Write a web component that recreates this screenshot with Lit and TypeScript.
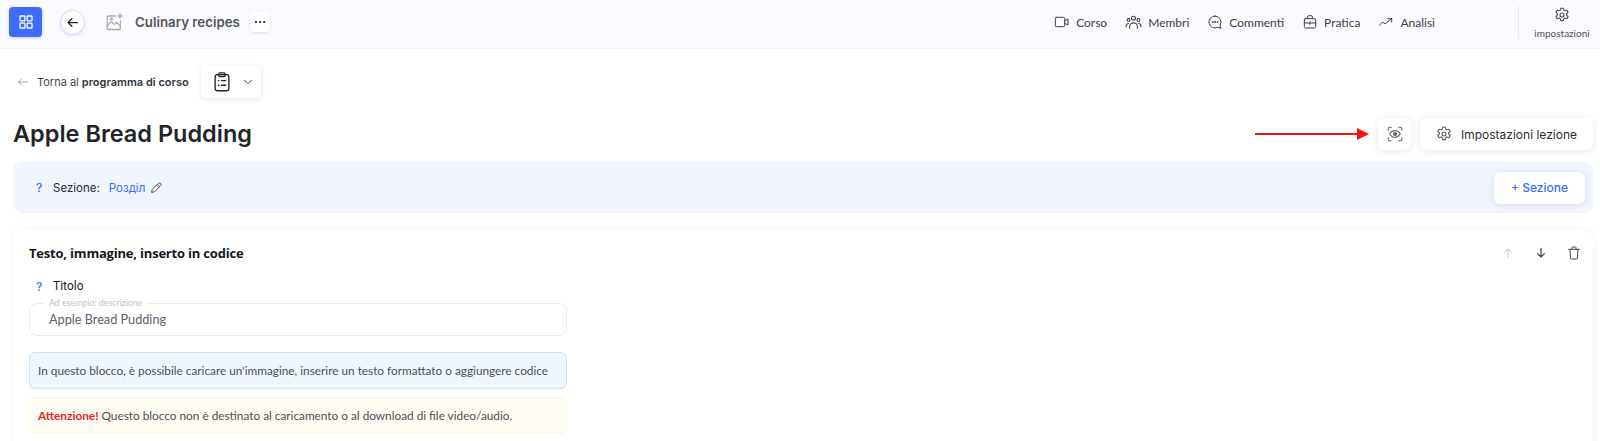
import { LitElement, html, css, svg } from "lit";
import { customElement } from "lit/decorators.js";

const ic = (size: number, body: unknown, sw = 1.5) => html`<svg width=${size} height=${size} viewBox="0 0 24 24" fill="none" stroke="currentColor" stroke-width=${sw} stroke-linecap="round" stroke-linejoin="round">${body}</svg>`;

const gear = svg`<path d="M10.300 3h3.400l.6 2.500 1.700.9 2.400-.8 1.700 2.900-1.900 1.800v1.900l1.900 1.800-1.700 2.900-2.400-.8-1.700.9-.6 2.500h-3.400l-.6-2.500-1.700-.9-2.400.8-1.700-2.900 1.900-1.800v-1.900l-1.900-1.800 1.700-2.900 2.400.8 1.700-.9z"/><circle cx="12" cy="12" r="2.600"/>`;

@customElement("app-root")
export class AppRoot extends LitElement {
  static styles = css`
    :host { display: block; height: 441px; overflow: hidden; background: #fff; font-family: Inter, sans-serif; color: #1f2126; position: relative; }
    * { box-sizing: border-box; }
    svg { display: block; flex: none; }
    .top { height: 49px; background: #fafaff; border-bottom: 1px solid #eef0f8; display: flex; align-items: center; padding: 0 0 4px 9px; }
    .grid { width: 33px; height: 30px; border-radius: 4px; background: #3d6bfb; color: #fff; display: flex; align-items: center; justify-content: center; box-shadow: 0 1px 3px rgba(61,107,251,.3); }
    .back { width: 25px; height: 25px; margin-left: 18px; border-radius: 50%; background: #fff; border: 1px solid #d3dcf8; box-shadow: 0 1px 3px rgba(61,107,251,.15); display: flex; align-items: center; justify-content: center; color: #20242c; }
    .pic { margin-left: 20px; color: #a4abb8; }
    .course { margin-left: 12px; font-size: 13.300px; font-weight: 600; color: #51565f; }
    .dots { margin-left: 10px; width: 20px; height: 20px; border-radius: 4px; background: #fff; box-shadow: 0 1px 3px rgba(40,50,90,.12); display: flex; align-items: center; justify-content: center; color: #20242c; }
    .nav { margin-left: auto; display: flex; align-items: center; gap: 18px; font-family: Lato, sans-serif; font-size: 12px; color: #3c4049; }
    .nav a { display: flex; align-items: center; gap: 6px; }
    .set { margin-left: 83px; width: 82px; height: 33px; border-left: 1px solid #e8e9f0; display: flex; flex-direction: column; align-items: center; justify-content: space-between; font-family: Lato, sans-serif; font-size: 10px; color: #4d525c; padding-left: 5px; }
    .crumbs { display: flex; align-items: center; height: 32px; margin: 17px 0 0 17px; font-size: 11px; color: #43474f; }
    .crumbs .arrow { color: #8b8f98; margin-right: 8px; }
    .crumbs b { font-weight: 600; color: #33363d; }
    .pick { margin-left: 12px; width: 60px; height: 32px; border-radius: 4px; background: #fff; box-shadow: 0 1px 5px rgba(40,50,90,.13); display: flex; align-items: center; padding-left: 10px; gap: 8px; color: #23262c; }
    .head { display: flex; align-items: center; height: 32px; margin: 20px 7px 0 13px; }
    h1 { margin: 0; font-size: 23.500px; font-weight: 600; color: #222428; flex: 1; line-height: 32px; }
    .btn { height: 32px; border-radius: 6px; background: #fff; box-shadow: 0 1px 6px rgba(40,50,90,.12); display: flex; align-items: center; justify-content: center; }
    .eye { width: 33px; color: #656a76; margin-right: 9px; }
    .lesson { width: 173px; gap: 8px; font-size: 12px; color: #2b2d33; padding-right: 1px; }
    .lesson svg { color: #555a62; }
    .section { margin: 12px 7px 0 13px; height: 51px; background: #f0f5fe; border-radius: 9px; display: flex; align-items: center; padding: 0 8px 0 23px; font-size: 11.500px; color: #2a2d33; }
    .q { color: #3d6bfb; width: 17px; font-family: Inter, sans-serif; font-weight: 500; font-size: 12px; }
    .link { color: #3d6bfb; margin: 0 5px 0 9px; }
    .add { margin-left: auto; width: 91px; font-size: 12px; font-weight: 500; color: #3d6bfb; }
    .card { margin: 17px 7px 0 13px; height: 240px; border-radius: 9px; background: #fff; box-shadow: 0 0 8px rgba(40,50,90,.06); padding: 16px 16px 0 16px; }
    .cardtop { display: flex; align-items: center; height: 14px; }
    h2 { margin: 0; flex: 1; font-family: "Open Sans", sans-serif; font-size: 13px; font-weight: 700; color: #15171b; letter-spacing: -.2px; }
    .tools { display: flex; gap: 17px; margin-right: -5px; color: #3d4656; }
    .tools .off { color: #c2c7d0; }
    .label { display: flex; align-items: center; margin: 17px 0 0 7px; height: 18px; font-size: 12px; font-family: Roboto, sans-serif; color: #20232a; }
    .col { width: 538px; }
    .field { position: relative; height: 33px; margin-top: 8px; border: 1px solid #e9ebf5; border-radius: 8px; display: flex; align-items: center; padding: 0 19px 2px; font-family: Lato, sans-serif; font-size: 12.700px; color: #5c616c; }
    .legend { position: absolute; left: 14px; top: -6px; padding: 0 5px; background: #fff; font-size: 8.800px; line-height: 10px; color: #b9c1d6; }
    .note { height: 37px; border-radius: 6px; display: flex; align-items: center; padding: 0 8px; font-family: Lato, sans-serif; font-size: 11.800px; color: #4b4f57; white-space: nowrap; }
    .info { margin-top: 16px; background: #eff7fc; border: 1px solid #c9e5f6; }
    .warn { margin-top: 8px; background: #fffcf4; border: 1px solid #fbf5e2; }
    .warn b { font-weight: 700; color: #e8222c; margin-right: 3px; }
    .mark { position: absolute; left: 1255px; top: 128px; }
  `;

  render() {
    return html`
      <div class="top">
        <div class="grid">${ic(18, svg`<rect x="4" y="4" width="6.500" height="6.500" rx=".8"/><rect x="13.500" y="4" width="6.500" height="6.500" rx=".8"/><rect x="4" y="13.500" width="6.500" height="6.500" rx=".8"/><rect x="13.500" y="13.500" width="6.500" height="6.500" rx=".8"/>`, 1.700)}</div>
        <div class="back">${ic(15, svg`<path d="M20 12H5M11 6l-6 6 6 6"/>`, 2)}</div>
        <div class="pic">${ic(18, svg`<path d="M14 4H4.500A1.500 1.500 0 0 0 3 5.500v15A1.500 1.500 0 0 0 4.500 22h14.500a1.500 1.500 0 0 0 1.500-1.500V11"/><path d="M3 17l5.500-5.500 4 4 3-3 5 5"/><circle cx="8.500" cy="8" r="1.300"/><path d="M20 1v6M17 4h6"/>`, 1.700)}</div>
        <span class="course">Culinary recipes</span>
        <div class="dots">${ic(14, svg`<circle cx="5" cy="12" r="1.100" fill="currentColor"/><circle cx="12" cy="12" r="1.100" fill="currentColor"/><circle cx="19" cy="12" r="1.100" fill="currentColor"/>`)}</div>
        <div class="nav">
          <a>${ic(16, svg`<rect x="2" y="5" width="14" height="14" rx="1.500"/><path d="M16 10l5-2.500v9L16 14"/>`)}Corso</a>
          <a>${ic(17, svg`<circle cx="12" cy="6" r="2.800"/><circle cx="5" cy="8.500" r="2"/><circle cx="19" cy="8.500" r="2"/><path d="M6.500 20v-2a5.500 5.500 0 0 1 11 0v2M1.500 18v-1a3.500 3.500 0 0 1 3.500-3.500M22.500 18v-1a3.500 3.500 0 0 0-3.500-3.500"/>`)}Membri</a>
          <a>${ic(16, svg`<path d="M12 3a9 9 0 1 0 4 17l5 1.500-1.500-4.500A9 9 0 0 0 12 3z"/><circle cx="8.500" cy="12" r=".6" fill="currentColor"/><circle cx="12" cy="12" r=".6" fill="currentColor"/><circle cx="15.500" cy="12" r=".6" fill="currentColor"/>`)}Commenti</a>
          <a>${ic(16, svg`<rect x="3.500" y="7" width="17" height="14" rx="2"/><path d="M8.500 7V4a1.500 1.500 0 0 1 1.500-1.500h4A1.500 1.500 0 0 1 15.500 4v3M3.500 13.500h17M12 11.500v4"/>`)}Pratica</a>
          <a>${ic(16, svg`<path d="M2 17l5-5 3.500 3L20 7M15 7h5.500v5"/>`)}Analisi</a>
        </div>
        <div class="set">${ic(18, gear)}<span>impostazioni</span></div>
      </div>

      <div class="crumbs">
        <span class="arrow">${ic(12, svg`<path d="M21 12H3M9 6l-6 6 6 6"/>`, 1.500)}</span>
        <span>Torna al <b>programma di corso</b></span>
        <div class="pick">
          ${ic(22, svg`<rect x="4.500" y="4" width="15" height="17.500" rx="2.500"/><rect x="8.500" y="2" width="7" height="4" rx="1.200"/><path d="M8 10.500h.6M11.500 10.500H16M8 15.500h.6M11.500 15.500H16"/>`, 1.500)}
          ${ic(14, svg`<path d="M6 9l6 6 6-6"/>`)}
        </div>
      </div>

      <div class="head">
        <h1>Apple Bread Pudding</h1>
        <div class="btn eye">${ic(18, svg`<path d="M3 7V5a2 2 0 0 1 2-2h2M17 3h2a2 2 0 0 1 2 2v2M21 17v2a2 2 0 0 1-2 2h-2M7 21H5a2 2 0 0 1-2-2v-2"/><path d="M5 12s2.500-4.500 7-4.500 7 4.500 7 4.500-2.500 4.500-7 4.500S5 12 5 12z"/><circle cx="12" cy="12" r="2" fill="currentColor"/>`)}</div>
        <div class="btn lesson">${ic(18, gear)}<span>Impostazioni lezione</span></div>
      </div>

      <div class="section">
        <span class="q">?</span><span>Sezione:</span><span class="link">Розділ</span>
        ${ic(13, svg`<path d="M15.500 4.500a2.800 2.800 0 0 1 4 4L8 20l-5 1 1-5z"/><path d="M13.500 6.500l4 4"/>`)}
        <div class="btn add">+ Sezione</div>
      </div>

      <div class="card">
        <div class="cardtop">
          <h2>Testo, immagine, inserto in codice</h2>
          <div class="tools">
            <span class="off">${ic(16, svg`<path d="M12 19V6M7 11l5-5 5 5"/>`)}</span>
            <span>${ic(16, svg`<path d="M12 5v13M7 13l5 5 5-5"/>`, 1.900)}</span>
            <span>${ic(16, svg`<path d="M4 6.500h16M9 6.500V4a1 1 0 0 1 1-1h4a1 1 0 0 1 1 1v2.500M6 6.500l.8 13a1.500 1.500 0 0 0 1.500 1.500h7.400a1.500 1.500 0 0 0 1.500-1.500l.8-13"/>`)}</span>
          </div>
        </div>
        <div class="label"><span class="q">?</span>Titolo</div>
        <div class="col">
          <div class="field"><span class="legend">Ad esempio: descrizione</span>Apple Bread Pudding</div>
          <div class="note info">In questo blocco, è possibile caricare un'immagine, inserire un testo formattato o aggiungere codice</div>
          <div class="note warn"><b>Attenzione!</b> Questo blocco non è destinato al caricamento o al download di file video/audio.</div>
        </div>
      </div>

      <svg class="mark" width="114" height="12" viewBox="0 0 114 12"><path d="M0 6h103" stroke="#f5140c" stroke-width="2"/><path d="M102 0l12 6-12 6z" fill="#f5140c"/></svg>
    `;
  }
}
